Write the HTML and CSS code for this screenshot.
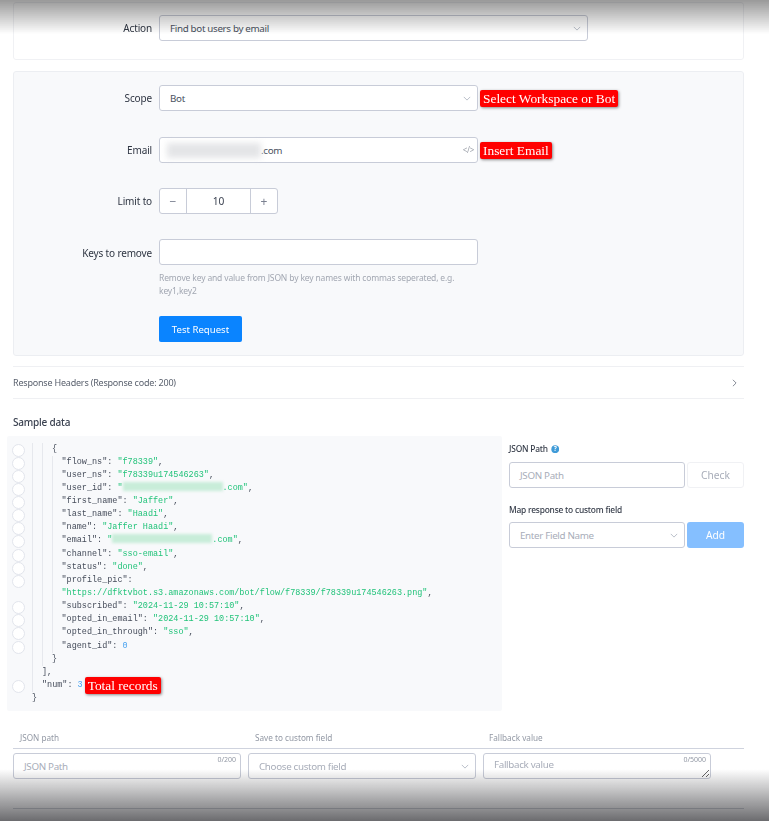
FILE: index.html
```html
<!DOCTYPE html>
<html lang="en">
<head>
<meta charset="utf-8">
<title>Find bot users by email</title>
<link rel="stylesheet" href="styles.css">
</head>
<body>
<main class="page">
  <section class="card card-action">
    <div class="row">
      <label class="row-label">Action</label>
      <div class="field select wide"><span>Find bot users by email</span><svg class="chev" viewBox="0 0 10 6"><path d="M1 1l4 4 4-4"/></svg></div>
    </div>
  </section>

  <section class="card card-form">
    <div class="row">
      <label class="row-label">Scope</label>
      <div class="field select"><span>Bot</span><svg class="chev" viewBox="0 0 10 6"><path d="M1 1l4 4 4-4"/></svg></div>
      <span class="note">Select Workspace or Bot</span>
    </div>
    <div class="row">
      <label class="row-label">Email</label>
      <div class="field email"><span class="smudge"></span><span>.com</span><span class="code-tag">&lt;/&gt;</span></div>
      <span class="note">Insert Email</span>
    </div>
    <div class="row">
      <label class="row-label">Limit to</label>
      <div class="stepper">
        <span class="step">−</span>
        <span class="step-value">10</span>
        <span class="step">+</span>
      </div>
    </div>
    <div class="row row-top">
      <label class="row-label">Keys to remove</label>
      <div class="keys">
        <div class="field"></div>
        <p class="help">Remove key and value from JSON by key names with commas seperated, e.g. key1,key2</p>
        <button class="btn-primary" type="button">Test Request</button>
      </div>
    </div>
  </section>

  <div class="headers-row">
    <span>Response Headers (Response code: 200)</span>
    <svg class="chev-right" viewBox="0 0 6 10"><path d="M1 1l4 4-4 4"/></svg>
  </div>

  <h2 class="section-title">Sample data</h2>

  <div class="sample">
    <div class="code">
      <div class="line dot d2"><code>{</code></div>
      <div class="line dot d3"><code>"flow_ns": <b>"f78339"</b>,</code></div>
      <div class="line dot d3"><code>"user_ns": <b>"f78339u174546263"</b>,</code></div>
      <div class="line dot d3"><code>"user_id": <b>"<i class="patch p1"></i>.com"</b>,</code></div>
      <div class="line dot d3"><code>"first_name": <b>"Jaffer"</b>,</code></div>
      <div class="line dot d3"><code>"last_name": <b>"Haadi"</b>,</code></div>
      <div class="line dot d3"><code>"name": <b>"Jaffer Haadi"</b>,</code></div>
      <div class="line dot d3"><code>"email": <b>"<i class="patch p2"></i>.com"</b>,</code></div>
      <div class="line dot d3"><code>"channel": <b>"sso-email"</b>,</code></div>
      <div class="line dot d3"><code>"status": <b>"done"</b>,</code></div>
      <div class="line dot d3"><code>"profile_pic":</code></div>
      <div class="line d3"><code><b>"https://dfktvbot.s3.amazonaws.com/bot/flow/f78339/f78339u174546263.png"</b>,</code></div>
      <div class="line dot d3"><code>"subscribed": <b>"2024-11-29 10:57:10"</b>,</code></div>
      <div class="line dot d3"><code>"opted_in_email": <b>"2024-11-29 10:57:10"</b>,</code></div>
      <div class="line dot d3"><code>"opted_in_through": <b>"sso"</b>,</code></div>
      <div class="line dot d3"><code>"agent_id": <em>0</em></code></div>
      <div class="line d2"><code>}</code></div>
      <div class="line d1"><code>],</code></div>
      <div class="line dot d1"><code>"num": <em>3</em></code><span class="note note-code">Total records</span></div>
      <div class="line d0"><code>}</code></div>
    </div>

    <aside class="mapper">
      <div class="mapper-label first">JSON Path
        <svg class="help-icon" viewBox="0 0 12 12"><circle cx="6" cy="6" r="5.5"/><text x="6" y="9" text-anchor="middle">?</text></svg>
      </div>
      <div class="mapper-row">
        <div class="field ph grow"><span>JSON Path</span></div>
        <button class="btn-ghost" type="button">Check</button>
      </div>
      <div class="mapper-label">Map response to custom field</div>
      <div class="mapper-row">
        <div class="field select ph grow"><span>Enter Field Name</span><svg class="chev" viewBox="0 0 10 6"><path d="M1 1l4 4 4-4"/></svg></div>
        <button class="btn-faded" type="button">Add</button>
      </div>
    </aside>
  </div>

  <div class="map-head">
    <span>JSON path</span><span>Save to custom field</span><span>Fallback value</span>
  </div>
  <div class="map-row">
    <div class="field ph counted"><span>JSON Path</span><small class="count">0/200</small></div>
    <div class="field select ph"><span>Choose custom field</span><svg class="chev" viewBox="0 0 10 6"><path d="M1 1l4 4 4-4"/></svg></div>
    <div class="field ph counted area"><textarea placeholder="Fallback value"></textarea><small class="count">0/5000</small></div>
  </div>
  <hr class="end-rule">
</main>
<div class="shade shade-top"></div>
<div class="shade shade-bottom"></div>
</body>
</html>
```
FILE: styles.css
```css
* { box-sizing: border-box; }
html, body { margin: 0; height: 821px; overflow: hidden; background: #fff; }
body { position: relative; font-family: "Noto Sans", "Open Sans", sans-serif; font-size: 10.2px; color: #3a4150; }
.page { padding: 2px 25px 0 13px; filter: blur(.45px); }

.card { border: 1px solid #f0f1f4; border-radius: 3px; }
.card-action { height: 58px; padding-top: 12px; margin-bottom: 11px; }
.card-form { height: 285px; padding-top: 13px; background: #f8f9fb; border-color: #eceef2; margin-bottom: 10px; }

.row { display: flex; align-items: center; margin-bottom: 25px; }
.row:first-child { margin-bottom: 26px; }
.row-top { align-items: flex-start; margin-bottom: 0; }
.row-top .row-label { padding-top: 7px; }
.row-label { width: 138px; flex: none; margin-right: 7px; text-align: right; font-size: 10px; letter-spacing: -.15px; color: #2e3542; }

.field { position: relative; display: flex; align-items: center; width: 319px; height: 26px; padding: 0 10px; background: #fff; border: 1px solid #c8ccd8; border-radius: 3px; font-size: 9.8px; letter-spacing: -.33px; color: #4a5160; }
.wide { width: 429px; }
.chev { position: absolute; right: 6px; top: 10px; width: 8px; height: 5px; fill: none; stroke: #aab0bc; stroke-width: 1; }
.email { padding-left: 0; }
.smudge { width: 94px; height: 15px; margin: 0 0 0 7px; background: #e4e5e7; filter: blur(3px); }
.code-tag { position: absolute; right: 3px; top: 6px; font-size: 8px; color: #9a9fa8; }

.note { flex: none; height: 17px; margin-left: 2px; padding: 0 3px; background: #f00; color: #fff; border-radius: 2px; box-shadow: 1px 1px 3px rgba(0, 0, 0, .45); font: 13.4px/17px "Liberation Serif", serif; white-space: nowrap; }

.stepper { display: flex; height: 26px; background: #fff; border: 1px solid #c8ccd8; border-radius: 3px; }
.step { display: flex; align-items: center; justify-content: center; width: 26px; color: #7a8090; font-size: 12px; }
.step-value { display: flex; align-items: center; justify-content: center; width: 65px; border: solid #c8ccd8; border-width: 0 1px; }

.keys { width: 319px; }
.help { margin: 6px 0 19px; font-size: 8.5px; letter-spacing: -.15px; line-height: 13px; color: #a2a7b2; }
.btn-primary { display: block; width: 83px; height: 26px; padding: 0; border: 0; border-radius: 2px; background: #0a84ff; color: #fff; font: inherit; font-size: 9.6px; }

.headers-row { display: flex; align-items: center; justify-content: space-between; height: 33px; border: solid #eff0f3; border-width: 1px 0; padding-right: 7px; font-size: 9px; letter-spacing: -.2px; color: #5a616e; }
.chev-right { width: 5px; height: 8px; fill: none; stroke: #777d8a; stroke-width: 1.1; }
.section-title { margin: 16px 0 7px; font-size: 10px; letter-spacing: -.2px; line-height: 14px; font-weight: 500; color: #3a4150; }

.sample { display: flex; margin-left: -6px; }
.code { width: 495px; height: 275px; padding: 6.5px 0 0; background: #f8f9fb; border-radius: 2px; }
.line { position: relative; display: flex; align-items: center; height: 13.15px; white-space: pre; font: 8.48px/13.15px "Liberation Mono", monospace; color: #454c5a; }
.line code { font: inherit; }
.line b { font-weight: 400; color: #22c37a; }
.line em { font-style: normal; color: #4aa3f0; }
.dot::before { content: ""; position: absolute; left: 5px; top: 1px; width: 11px; height: 11px; border: 1px solid #e2e5ec; border-radius: 50%; background: #fff; }
.d0 { padding-left: 25px; }
.d1 { padding-left: 35px; background: linear-gradient(#e6e8ed, #e6e8ed) 25px 0 / 1px 100% no-repeat; }
.d2 { padding-left: 45px; background: linear-gradient(#e6e8ed, #e6e8ed) 25px 0 / 1px 100% no-repeat, linear-gradient(#e6e8ed, #e6e8ed) 35px 0 / 1px 100% no-repeat; }
.d3 { padding-left: 54.5px; background: linear-gradient(#e6e8ed, #e6e8ed) 25px 0 / 1px 100% no-repeat, linear-gradient(#e6e8ed, #e6e8ed) 35px 0 / 1px 100% no-repeat, linear-gradient(#e6e8ed, #e6e8ed) 45px 0 / 1px 100% no-repeat; }
.patch { display: inline-block; height: 9px; vertical-align: -1px; background: #c8edd9; filter: blur(1.5px); }
.p1, .p2 { width: 100px; }
.note-code { margin-left: 2px; padding: 0 3px; height: 17px; }

.mapper { width: 235px; margin-left: 7px; }
.mapper-label { margin: 15.5px 0 6.5px; height: 12px; font-size: 8.4px; letter-spacing: -.2px; line-height: 12px; font-weight: 500; color: #333a47; }
.mapper-label.first { margin: 7px 0; display: flex; align-items: center; gap: 3px; }
.help-icon { width: 8.5px; height: 8.5px; }
.help-icon circle { fill: #3f9bd8; }
.help-icon text { fill: #fff; font: 700 9px "Noto Sans", sans-serif; }
.mapper-row { display: flex; gap: 2px; }
.grow { flex: 1; width: auto; }
.ph { color: #a8adb9; }
.btn-ghost, .btn-faded { width: 57px; height: 26px; padding: 0; border-radius: 3px; font: inherit; }
.btn-ghost { background: #fff; border: 1px solid #f0f1f4; color: #a8adb9; }
.btn-faded { background: #85bfff; border: 0; color: #fff; }

.map-head { display: grid; grid-template-columns: repeat(3, 228px); column-gap: 7px; margin-top: 17px; height: 21px; padding: 4px 7px 0; border-bottom: 1px solid #cfd3de; font-size: 8.2px; color: #9298a4; }
.map-head span:nth-child(3) { margin-left: -1px; }
.map-row { display: grid; grid-template-columns: repeat(3, 228px); column-gap: 7px; margin-top: 4px; }
.map-row .field { width: auto; }
.count { position: absolute; right: 4px; top: 1px; font-size: 7px; letter-spacing: 0; color: #9298a4; }
.area { padding: 0; }
textarea { display: block; width: 100%; height: 100%; padding: 4px 10px; border: 0; background: transparent; border-radius: 3px; outline: 0; font: inherit; letter-spacing: inherit; color: #a8adb9; overflow: hidden; }
textarea::placeholder { color: #a8adb9; opacity: 1; }
.end-rule { margin: 29px 0 0; border: 0; border-top: 1px solid #d3d6dc; }

.shade { position: absolute; left: 0; right: 0; pointer-events: none; }
.shade-top { top: 0; height: 34px; background: linear-gradient(rgba(0, 0, 0, .4), rgba(0, 0, 0, 0)); }
.shade-bottom { bottom: 0; height: 52px; background: linear-gradient(rgba(10, 10, 15, 0), rgba(10, 10, 15, .6)); }
```
